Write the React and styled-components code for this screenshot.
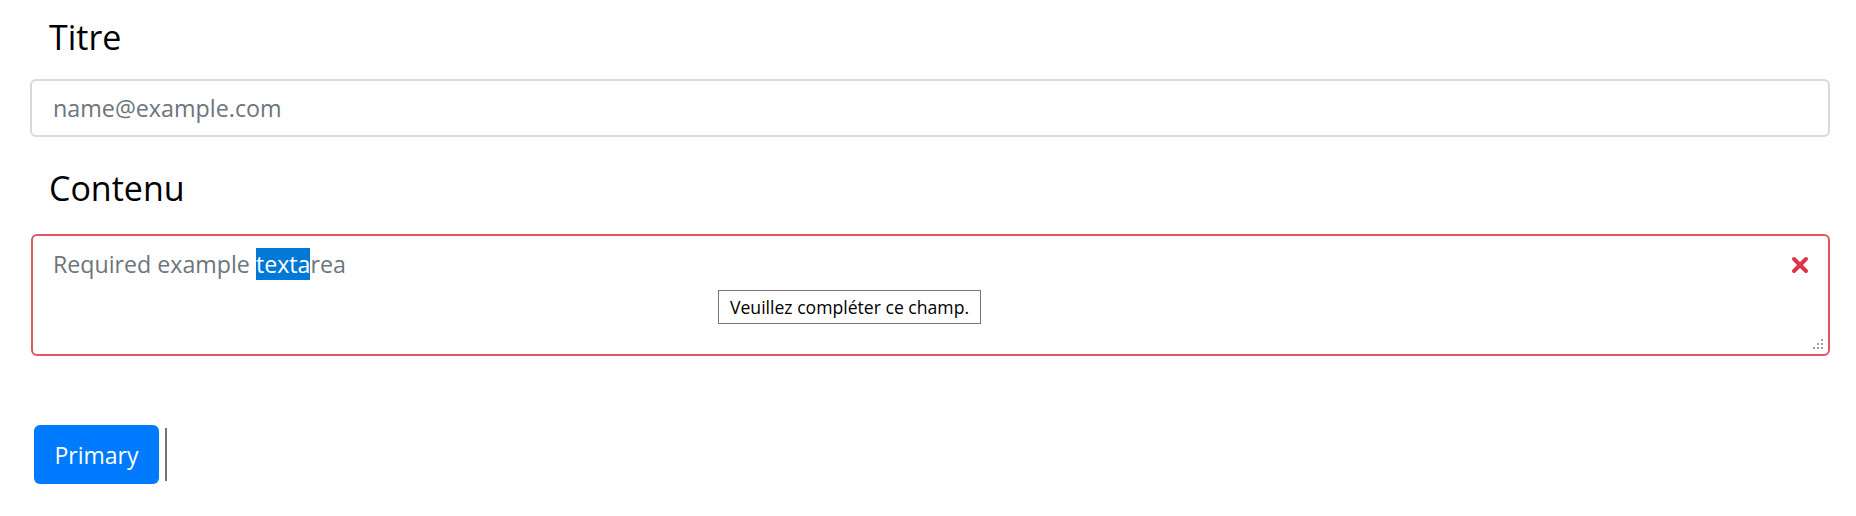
import React from 'react';
import styled, {createGlobalStyle} from 'styled-components';

const GlobalStyle = createGlobalStyle`
  html, body {
    margin: 0;
    padding: 0;
    background: #ffffff;
  }
  body {
    font-family: "Open Sans", "Noto Sans", "Liberation Sans", sans-serif;
    color: #000000;
  }
`;

const Page = styled.div`
  width: 1856px;
  height: 516px;
  box-sizing: border-box;
  padding: 15px 26px 0 30px;
  position: relative;
`;

const Label = styled.div`
  font-size: 34px;
  line-height: 44px;
  padding-left: 19px;
  margin-bottom: ${p => p.$gap}px;
`;

const Input = styled.div`
  box-sizing: border-box;
  width: 1800px;
  height: 58px;
  border: 2px solid #d6dade;
  border-radius: 6px;
  padding: 0 21px;
  display: flex;
  align-items: center;
  font-size: 23.3px;
  color: #6c757d;
  margin-bottom: 29px;
`;

const TextArea = styled.div`
  box-sizing: border-box;
  position: relative;
  width: 1799px;
  height: 122px;
  margin-left: 1px;
  border: 2px solid #e25563;
  border-radius: 6px;
  padding: 12px 20px;
  font-size: 23.2px;
  line-height: 32px;
  color: #6c757d;
`;

const Selected = styled.span`
  background: #0078d7;
  color: #ffffff;
`;

const InvalidIcon = styled.svg`
  position: absolute;
  right: 19px;
  top: 20px;
`;

const Grip = styled.svg`
  position: absolute;
  right: 3px;
  bottom: 3px;
`;

const Tooltip = styled.div`
  position: absolute;
  left: 718px;
  top: 290px;
  box-sizing: border-box;
  height: 34px;
  padding: 0 11px;
  border: 1px solid #767676;
  background: #ffffff;
  color: #000000;
  font-size: 17.6px;
  display: flex;
  align-items: center;
  white-space: nowrap;
`;

const Actions = styled.div`
  display: flex;
  align-items: center;
  gap: 6px;
  margin-top: 69px;
  margin-left: 4px;
`;

const Button = styled.button`
  box-sizing: border-box;
  width: 125px;
  height: 59px;
  border: none;
  border-radius: 6px;
  background: #007bff;
  color: #ffffff;
  font-family: inherit;
  font-size: 23px;
  padding: 0;
`;

const Caret = styled.div`
  width: 2px;
  height: 53px;
  background: #6c757d;
`;

export default function App() {
    return (
        <>
            <GlobalStyle/>
            <Page>
                <Label $gap={20}>Titre</Label>
                <Input>name@example.com</Input>
                <Label $gap={24}>Contenu</Label>
                <TextArea>
                    Required example <Selected>texta</Selected>rea
                    <InvalidIcon width="18" height="18" viewBox="0 0 18 18">
                        <path d="M3 3 L15 15 M15 3 L3 15" stroke="#dc3545" strokeWidth="4" strokeLinecap="round"/>
                    </InvalidIcon>
                    <Grip width="14" height="14" viewBox="0 0 14 14" fill="#a0a0a0">
                        <rect x="10" y="2" width="2" height="2"/>
                        <rect x="6" y="6" width="2" height="2"/>
                        <rect x="10" y="6" width="2" height="2"/>
                        <rect x="2" y="10" width="2" height="2"/>
                        <rect x="6" y="10" width="2" height="2"/>
                        <rect x="10" y="10" width="2" height="2"/>
                    </Grip>
                </TextArea>
                <Actions>
                    <Button>Primary</Button>
                    <Caret/>
                </Actions>
                <Tooltip>Veuillez compléter ce champ.</Tooltip>
            </Page>
        </>
    );
}
